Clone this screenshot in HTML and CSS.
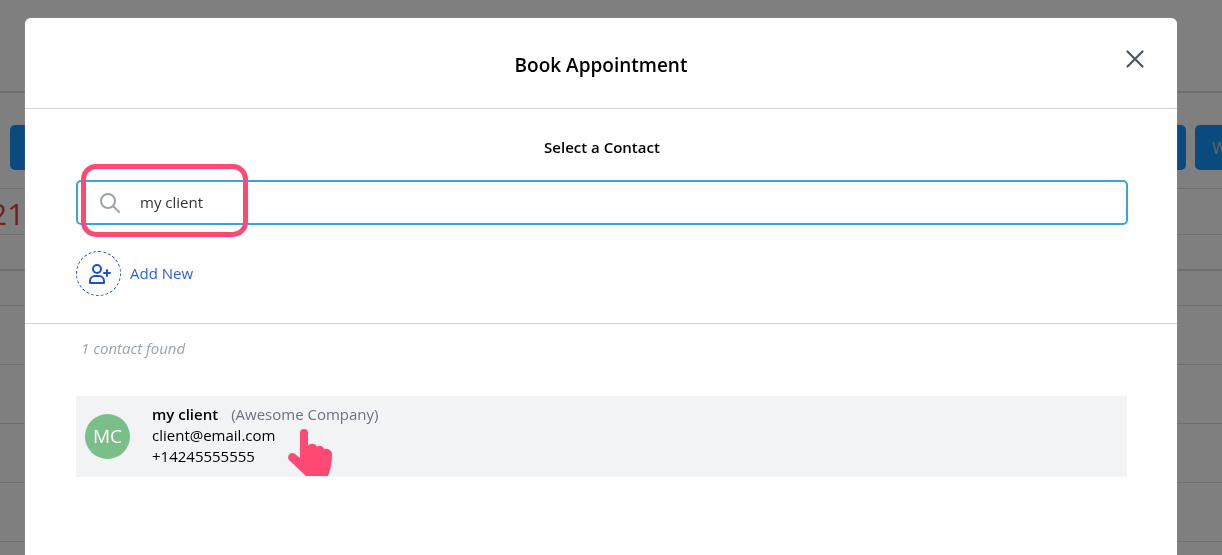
FILE: index.html
```html
<!DOCTYPE html>
<html>
<head>
    <title>Book Appointment</title>
    <link rel="stylesheet" href="styles.css">
</head>
<body>
    <div class="page">
        <div class="topbar"></div>
        <div class="toolbar">
            <button class="tool-btn first"></button>
            <div class="spacer"></div>
            <button class="tool-btn second"></button>
            <button class="tool-btn third">W</button>
        </div>
        <div class="date-row">21</div>
        <div class="slot slot-a"></div>
        <div class="slot slot-b"></div>
        <div class="slot slot-c"></div>
        <div class="slot slot-c"></div>
        <div class="slot slot-c"></div>
        <div class="slot slot-c"></div>
    </div>
    <div class="overlay"></div>

    <div class="modal">
        <div class="modal-header">
            <h1>Book Appointment</h1>
            <button class="close-btn">
                <svg width="24" height="24" viewBox="0 0 24 24" fill="none" stroke="#4b5563" stroke-width="2.2" stroke-linecap="round">
                    <path d="M4.500 4.500l15 15M19.500 4.500l-15 15"/>
                </svg>
            </button>
        </div>
        <div class="search-section">
            <h2>Select a Contact</h2>
            <div class="search-box">
                <svg width="24" height="24" viewBox="0 0 24 24" fill="none" stroke="#9ca3af" stroke-width="2" stroke-linecap="round">
                    <circle cx="10" cy="10" r="7"/>
                    <path d="M15.500 15.500L21 21"/>
                </svg>
                <span>my client</span>
            </div>
            <div class="add-new">
                <span class="add-icon">
                    <svg width="24" height="24" viewBox="0 0 24 24" fill="none" stroke="#1d4ed8" stroke-width="2" stroke-linecap="round" stroke-linejoin="round">
                        <circle cx="10" cy="7" r="4"/>
                        <path d="M3 21v-2a5 5 0 0 1 5-5h4a5 5 0 0 1 5 5v2z"/>
                        <path d="M20 8v6M17 11h6"/>
                    </svg>
                </span>
                <span class="add-label">Add New</span>
            </div>
        </div>
        <div class="results">
            <p class="found">1 contact found</p>
            <div class="contact">
                <div class="avatar">MC</div>
                <div class="contact-info">
                    <div><strong>my client</strong><span class="company">(Awesome Company)</span></div>
                    <div>client@email.com</div>
                    <div>+14245555555</div>
                </div>
            </div>
        </div>
    </div>

    <div class="highlight-box"></div>
    <svg class="pointer" width="46" height="48" viewBox="0 0 46 48">
        <path fill="#ff4975" d="M13 4a4 4 0 0 1 8 0v13c1-3 8-3 9 1 1-2 6-2 7 2 3-1 8 1 8 5 0 7-1 15-4 22H19L2 31c-3-4 2-9 6-6l5 4z"/>
    </svg>
</body>
</html>
```

FILE: styles.css
```css
html, body {
    height: 100%;
}
body {
    font-family: 'Open Sans', sans-serif;
    margin: 0;
    overflow: hidden;
    background-color: #fff;
    color: #000;
}
.topbar {
    height: 91px;
    border-bottom: 2px solid #ddd;
}
.toolbar {
    display: flex;
    padding: 32px 0 0 10px;
    gap: 9px;
    height: 63px;
    border-bottom: 1px solid #ddd;
}
.tool-btn {
    width: 100px;
    height: 45px;
    border: none;
    border-radius: 5px;
    background: #1694fc;
    color: #ccc;
    font: 16px 'Open Sans', sans-serif;
}
.tool-btn.third {
    flex-shrink: 0;
    text-align: left;
    padding-left: 17px;
    width: 60px;
    margin-right: -33px;
}
.spacer {
    flex: 1;
}
.date-row {
    height: 45px;
    line-height: 50px;
    font-size: 30px;
    text-indent: -10px;
    color: #e53e3e;
    border-bottom: 1px solid #ddd;
}
.slot {
    border-bottom: 1px solid #ddd;
}
.slot-a {
    height: 34px;
    border-bottom-width: 2px;
}
.slot-b {
    height: 34px;
}
.slot-c {
    height: 58px;
}
.overlay {
    position: fixed;
    inset: 0;
    background: rgba(0, 0, 0, 0.5);
}
.modal {
    position: absolute;
    left: 25px;
    top: 18px;
    width: 1152px;
    height: 560px;
    background: #fff;
    border-radius: 6px;
    box-shadow: 0 0 1px rgba(255, 255, 255, 0.6);
}
.modal-header {
    position: relative;
    display: flex;
    align-items: center;
    justify-content: center;
    height: 90px;
    border-bottom: 1px solid #d1d5db;
}
.modal-header h1 {
    margin: 4px 0 0;
    font-size: 19px;
    font-weight: 600;
}
.close-btn {
    position: absolute;
    right: 30px;
    top: 29px;
    padding: 0;
    background: none;
    border: none;
    height: 24px;
}
.search-section {
    height: 214px;
    padding: 0 49px 0 51px;
    border-bottom: 1px solid #d1d5db;
}
.search-section h2 {
    margin: 0;
    padding-top: 28px;
    font-size: 15px;
    line-height: 20px;
    font-weight: 600;
    text-align: center;
}
.search-box {
    display: flex;
    align-items: center;
    gap: 18px;
    height: 41px;
    margin-top: 23px;
    padding-left: 20px;
    border: 2px solid #3ba1e0;
    border-radius: 5px;
    font-size: 15px;
    color: #333;
}
.search-box span {
    margin-bottom: 2px;
}
.add-new {
    display: flex;
    align-items: center;
    gap: 9px;
    margin-top: 26px;
    font-size: 15px;
    color: #2b5fdc;
}
.add-label {
    margin-bottom: 2px;
}
.add-icon {
    display: flex;
    align-items: center;
    justify-content: center;
    width: 43px;
    height: 43px;
    border: 1px dashed #1d4ed8;
    border-radius: 50%;
}
.results {
    padding: 0 50px 0 51px;
}
.found {
    margin: 0;
    padding: 14px 0 0 5px;
    font-size: 15px;
    line-height: 20px;
    font-style: italic;
    color: #9ca3af;
}
.contact {
    display: flex;
    align-items: center;
    gap: 22px;
    height: 81px;
    margin-top: 38px;
    padding-left: 9px;
    background: #f2f3f5;
    font-size: 15px;
    line-height: 21px;
}
.avatar {
    display: flex;
    align-items: center;
    justify-content: center;
    width: 45px;
    height: 45px;
    border-radius: 50%;
    background: #7abf8a;
    color: #fff;
    font-size: 19px;
}
.contact-info {
    margin-bottom: 2px;
}
.contact-info strong {
    font-weight: 600;
}
.company {
    margin-left: 13px;
    color: #6b7280;
}
.highlight-box {
    position: absolute;
    left: 81px;
    top: 164px;
    width: 157px;
    height: 63px;
    border: 5px solid #ff4975;
    border-radius: 15px;
}
.pointer {
    position: absolute;
    left: 287px;
    top: 429px;
}
```
